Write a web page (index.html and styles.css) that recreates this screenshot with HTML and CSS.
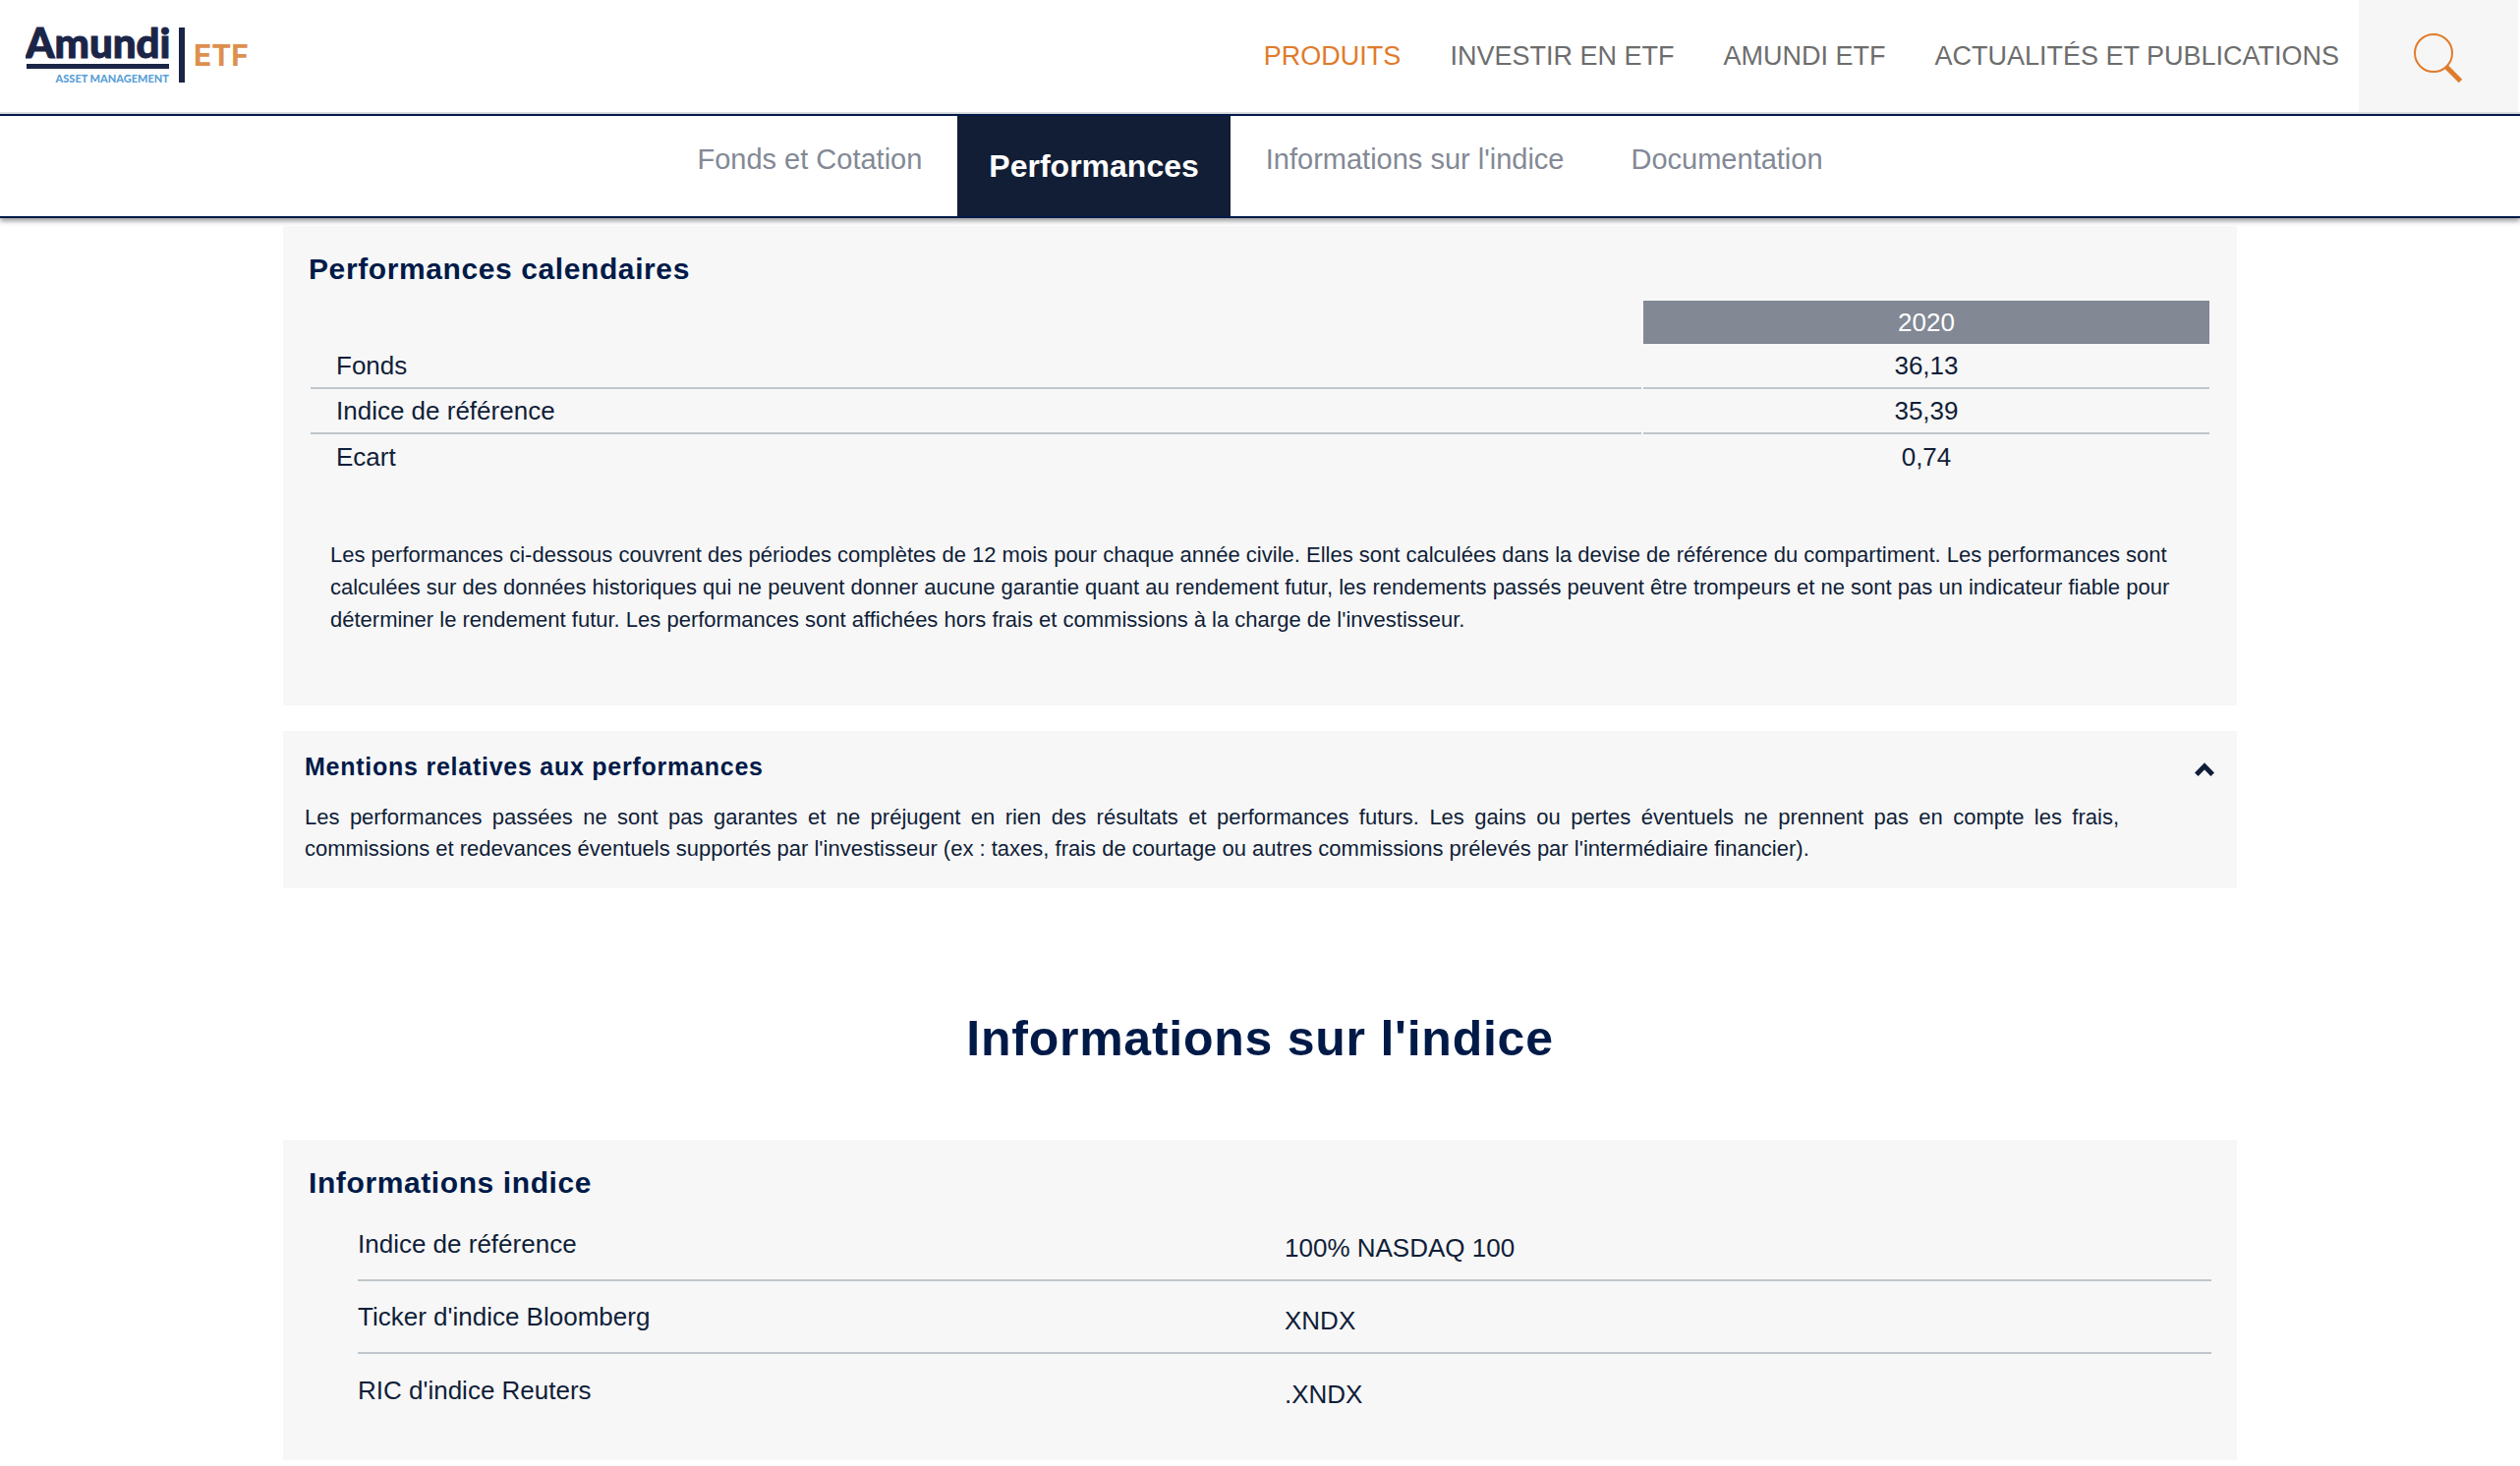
FILE: index.html
```html
<!DOCTYPE html>
<html lang="fr">
<head>
<meta charset="utf-8">
<meta name="viewport" content="width=device-width, initial-scale=1">
<title>Amundi ETF - Performances</title>
<link rel="stylesheet" href="styles.css">
</head>
<body>
<header class="site-header">
  <a class="logo" href="#" aria-label="Amundi ETF">
    <svg width="232" height="76" viewBox="0 -12 232 76">
      <text class="logo-name" x="0" y="33">Amundi</text>
      <rect x="1" y="39" width="145" height="5" fill="#1b2547"/>
      <text class="logo-sub" x="146" y="58" text-anchor="end">ASSET MANAGEMENT</text>
      <rect x="156" y="2" width="6" height="56" fill="#1b2547"/>
      <text class="logo-etf" x="171" y="41">ETF</text>
    </svg>
  </a>
  <nav class="main-nav" aria-label="Navigation principale">
    <a class="active" href="#">PRODUITS</a>
    <a href="#">INVESTIR EN ETF</a>
    <a href="#">AMUNDI ETF</a>
    <a href="#">ACTUALITÉS ET PUBLICATIONS</a>
  </nav>
  <button class="search" type="button" aria-label="Rechercher">
    <svg width="52" height="52" viewBox="0 0 52 52" fill="none" stroke="#e07b2b">
      <circle cx="21" cy="21" r="19" stroke-width="2"/>
      <path d="M34 35 48.5 49.5" stroke-width="5"/>
    </svg>
  </button>
</header>

<nav class="tabs" aria-label="Sections du fonds">
  <a href="#">Fonds et Cotation</a>
  <a class="current" href="#" aria-current="true">Performances</a>
  <a href="#">Informations sur l'indice</a>
  <a href="#">Documentation</a>
</nav>

<main class="content">
  <section class="card calendar">
    <h2>Performances calendaires</h2>
    <table class="yearly">
      <thead>
        <tr><td></td><th scope="col">2020</th></tr>
      </thead>
      <tbody>
        <tr><th scope="row">Fonds</th><td>36,13</td></tr>
        <tr><th scope="row">Indice de référence</th><td>35,39</td></tr>
        <tr><th scope="row">Ecart</th><td>0,74</td></tr>
      </tbody>
    </table>
    <p class="note">Les performances ci-dessous couvrent des périodes complètes de 12 mois pour chaque année civile. Elles sont calculées dans la devise de référence du compartiment. Les performances sont calculées sur des données historiques qui ne peuvent donner aucune garantie quant au rendement futur, les rendements passés peuvent être trompeurs et ne sont pas un indicateur fiable pour déterminer le rendement futur. Les performances sont affichées hors frais et commissions à la charge de l'investisseur.</p>
  </section>

  <section class="card mentions">
    <div class="mentions-text">
      <h3>Mentions relatives aux performances</h3>
      <p>Les performances passées ne sont pas garantes et ne préjugent en rien des résultats et performances futurs. Les gains ou pertes éventuels ne prennent pas en compte les frais, commissions et redevances éventuels supportés par l'investisseur (ex : taxes, frais de courtage ou autres commissions prélevés par l'intermédiaire financier).</p>
    </div>
    <button class="toggle" type="button" aria-label="Replier" aria-expanded="true">
      <svg width="20" height="14" viewBox="0 0 20 14" fill="none" stroke="#101e38" stroke-width="5">
        <path d="M1.8 12.2 10 3.8 18.2 12.2"/>
      </svg>
    </button>
  </section>

  <h1>Informations sur l'indice</h1>

  <section class="card index-info">
    <h2>Informations indice</h2>
    <table class="details">
      <tbody>
        <tr><th scope="row">Indice de référence</th><td>100% NASDAQ 100</td></tr>
        <tr><th scope="row">Ticker d'indice Bloomberg</th><td>XNDX</td></tr>
        <tr><th scope="row">RIC d'indice Reuters</th><td>.XNDX</td></tr>
      </tbody>
    </table>
  </section>
</main>
</body>
</html>
```
FILE: styles.css
```css
* {
  box-sizing: border-box;
}

body {
  margin: 0;
  background: #fff;
  color: #101e38;
  font-family: "Liberation Sans", Arial, sans-serif;
  font-size: 26px;
  line-height: 32px;
}

a {
  text-decoration: none;
}

button {
  padding: 0;
  border: 0;
  background: none;
  cursor: pointer;
}

svg {
  display: block;
}

h1,
h2,
h3,
p {
  margin: 0;
}

h1,
h2,
h3 {
  color: #001a48;
}

/* Header */
.site-header {
  display: flex;
  align-items: stretch;
  height: 116px;
  padding-right: 2px;
  border-bottom: 2px solid #e0e1e3;
}

.logo {
  padding: 14px 0 0 26px;
  margin-right: auto;
}

.logo-name,
.logo-sub {
  font-family: Lato, sans-serif;
  font-weight: 900;
}

.logo-name {
  font-size: 42px;
  fill: #1b2547;
  stroke: #1b2547;
  stroke-width: 1px;
}

.logo-sub {
  font-size: 11px;
  fill: #5a9fd8;
}

.logo-etf {
  font-family: Inter, sans-serif;
  font-size: 30px;
  font-weight: bold;
  fill: #dd8f4e;
}

.main-nav {
  display: flex;
  align-items: center;
  gap: 50px;
  padding-right: 20px;
  font-size: 27px;
}

.main-nav a {
  color: #6d6d6d;
}

.main-nav .active {
  color: #e07b2b;
}

.search {
  display: flex;
  align-items: center;
  justify-content: center;
  width: 162px;
  padding-top: 4px;
  background: #f6f6f6;
}

/* Section tabs */
.tabs {
  display: flex;
  justify-content: center;
  gap: 4px;
  height: 106px;
  border-top: 2px solid #001a48;
  border-bottom: 2px solid #001a48;
  box-shadow: 0 3px 5px rgba(0, 0, 0, 0.4);
}

.tabs a {
  padding: 28px 32px 0;
  color: #838995;
  font-size: 29px;
}

.tabs .current {
  padding-top: 35px;
  background: #121e35;
  color: #fff;
  font-size: 32px;
  font-weight: bold;
}

/* Content */
.content {
  max-width: 1988px;
  margin: 8px auto;
}

.card {
  background: #f7f7f7;
}

.card h2 {
  font-size: 30px;
  letter-spacing: 0.02em;
}

.calendar {
  padding: 28px 26px 71px;
}

.calendar h2 {
  margin-bottom: 16px;
}

.yearly {
  width: 100%;
  border-spacing: 2px 0;
}

.yearly th,
.yearly td {
  height: 46px;
  padding: 0;
  border-bottom: 2px solid #c0c6cb;
  text-align: center;
}

.yearly th {
  font-weight: normal;
}

.yearly thead th {
  width: 576px;
  background: #828894;
  color: #fff;
}

.yearly thead th,
.yearly thead td {
  height: 44px;
  border-bottom: 0;
}

.yearly tbody th {
  padding-left: 26px;
  text-align: left;
}

.yearly tbody tr:last-child > * {
  border-bottom: 0;
}

.note {
  padding: 60px 22px 0;
  font-size: 22px;
  line-height: 33px;
}

.mentions {
  display: flex;
  gap: 74px;
  align-items: flex-start;
  margin-top: 26px;
  padding: 20px 20px 24px 22px;
}

.mentions-text {
  flex: 1;
}

.mentions h3 {
  margin-bottom: 20px;
  font-size: 25px;
  letter-spacing: 0.03em;
}

.mentions p {
  font-size: 22px;
  text-align: justify;
}

.toggle {
  padding: 12px 3px;
}

h1 {
  padding: 125px 0 75px;
  font-size: 50px;
  line-height: 56px;
  letter-spacing: 0.015em;
  text-align: center;
}

.index-info {
  padding: 28px 26px 34px;
}

.index-info h2 {
  margin-bottom: 10px;
}

.details {
  width: calc(100% - 50px);
  margin-left: 50px;
  border-spacing: 0;
  table-layout: fixed;
}

.details th,
.details td {
  height: 74px;
  padding: 0;
  border-bottom: 2px solid #c0c6cb;
  font-weight: normal;
  text-align: left;
}

.details td {
  padding-top: 8px;
}

.details tr:last-child > * {
  border-bottom: 0;
}
```
